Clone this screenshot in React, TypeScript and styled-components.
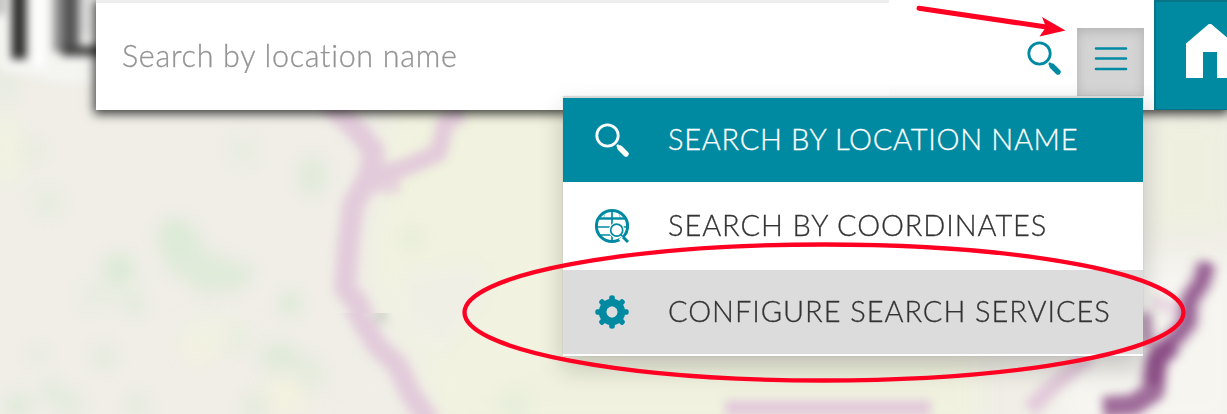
import React from "react";
import styled, { createGlobalStyle } from "styled-components";

const TEAL = "#008aa2";

const GlobalStyle = createGlobalStyle`
  * { box-sizing: border-box; }
  body { margin: 0; font-family: Lato, "Open Sans", sans-serif; font-weight: 300; }
`;

const Page = styled.main`
  position: relative;
  width: 1227px;
  height: 414px;
  overflow: hidden;
  background: #f0eee7;
`;

const MapCanvas = styled.svg`
  position: absolute;
  inset: 0;
`;

const TopBar = styled.header`
  position: relative;
  display: flex;
  height: 110px;
  margin-left: 96px;
  background: #fff;
  box-shadow: 0 2px 10px 2px rgba(0, 0, 0, 0.75);
`;

const Field = styled.input`
  width: 793px;
  height: 110px;
  padding: 0 26px 3px;
  border: 0;
  border-top: 3px solid #eeeeee;
  outline: none;
  background: transparent;
  font: 300 30.5px Lato, "Open Sans", sans-serif;
  letter-spacing: 0.7px;
  -webkit-text-stroke: 0.3px #949494;
  color: #999;
  &::placeholder { color: #949494; opacity: 1; }
`;

const Actions = styled.div`
  display: flex;
  flex: 1;
  justify-content: flex-end;
  align-items: flex-start;
  background: linear-gradient(#fff 75%, #f7f7f7);
`;

const SearchButton = styled.button`
  display: flex;
  margin: 40px 15px 0 0;
  padding: 0;
  border: 0;
  background: none;
`;

const MenuButton = styled.button`
  display: flex;
  justify-content: center;
  align-items: flex-start;
  width: 67px;
  height: 68px;
  margin: 28px 10px 0 0;
  padding: 18px 0 0;
  border: 0;
  background: #d4d4d4;
  box-shadow: inset 0 3px 12px rgba(0, 0, 0, 0.16);
`;

const HomeButton = styled.button`
  display: flex;
  align-items: flex-start;
  width: 73px;
  height: 110px;
  padding: 22px 0 0 30px;
  border: solid #087487;
  border-width: 2px 0 1px 2px;
  background: ${TEAL};
  overflow: hidden;
  svg { flex: none; }
`;

const Menu = styled.ul`
  position: absolute;
  left: 563px;
  top: 96px;
  width: 580px;
  height: 260px;
  margin: 0;
  padding: 0;
  border-top: 2px solid #d5d8d6;
  list-style: none;
  background: #fff;
  box-shadow: 0 12px 24px rgba(0, 0, 0, 0.2), 0 0 1px rgba(0, 0, 0, 0.2);
`;

const MenuItem = styled.li<{ $state?: "active" | "hover"; $spacing: number }>`
  display: flex;
  align-items: center;
  gap: 38px;
  height: 84px;
  margin-bottom: 2px;
  padding-left: 32px;
  white-space: nowrap;
  font-size: 29px;
  letter-spacing: ${(p) => p.$spacing}px;
  color: ${(p) => (p.$state === "active" ? "#fff" : "#333")};
  background: ${(p) =>
    p.$state === "active" ? TEAL : p.$state === "hover" ? "#dcdcdc" : "#fff"};
`;

const Label = styled.span`
  padding-bottom: 3px;
  -webkit-text-stroke: 0.3px currentColor;
`;

const Markup = styled.svg`
  position: absolute;
  inset: 0;
  pointer-events: none;
`;

function SearchIcon({ color = TEAL }: { color?: string }) {
  return (
    <svg width="35" height="36" viewBox="0 0 35 36" fill="none" stroke={color}>
      <circle cx="12.5" cy="13.5" r="10.7" strokeWidth="2.8" />
      <path d="M22 23 25 26" strokeWidth="2.5" />
      <path d="M25 26 31 32" strokeWidth="5.4" strokeLinecap="round" />
    </svg>
  );
}

function GlobeSearchIcon() {
  return (
    <svg width="35" height="36" viewBox="0 0 35 36" fill="none" stroke={TEAL}>
      <circle cx="17" cy="18" r="15.6" strokeWidth="3" />
      <path d="M3 10.5H31" strokeWidth="2.4" />
      <path d="M2 19H32M4 27H27M17 2V34" strokeWidth="1.7" />
      <path d="M12 2.5Q9 6 9 10M22 2.5Q25 6 25 10" strokeWidth="0.8" opacity="0.5" />
      <circle cx="21.7" cy="22.2" r="7.5" fill="#fff" stroke="#fff" strokeWidth="1" />
      <circle cx="21.7" cy="22.2" r="6" strokeWidth="1.7" />
      <path d="M25.5 29.5 34 38" stroke="#fff" strokeWidth="5" />
      <path d="m26 26.8 2 2" strokeWidth="1.5" />
      <path d="m28 29 5 5" strokeWidth="3" />
    </svg>
  );
}

function GearIcon() {
  const teeth = [0, 45, 90, 135, 180, 225, 270, 315];
  return (
    <svg width="35" height="36" viewBox="0 0 35 36" fill={TEAL}>
      {teeth.map((a) => (
        <path key={a} d="M10.5 9.5 14.2 5.5V3Q14.2 1.2 17 1.2T19.8 3V5.5L23.5 9.5Z" transform={`rotate(${a} 17 18)`} />
      ))}
      <circle cx="17" cy="18" r="9.3" fill="none" stroke={TEAL} strokeWidth="7.8" />
      <circle cx="17" cy="18" r="5.4" fill="#dcdcdc" />
    </svg>
  );
}

function MapBackground() {
  return (
    <MapCanvas width="1227" height="414">
      <defs>
        <filter id="soft" filterUnits="userSpaceOnUse" x="-60" y="-60" width="1350" height="540" colorInterpolationFilters="sRGB"><feGaussianBlur stdDeviation="5" /></filter>
        <filter id="patch" filterUnits="userSpaceOnUse" x="-60" y="-60" width="1350" height="540" colorInterpolationFilters="sRGB"><feGaussianBlur stdDeviation="8" /></filter>
        <filter id="wide" filterUnits="userSpaceOnUse" x="-60" y="-60" width="1350" height="540" colorInterpolationFilters="sRGB"><feGaussianBlur stdDeviation="12" /></filter>
        <filter id="letters" filterUnits="userSpaceOnUse" x="-60" y="-60" width="250" height="200" colorInterpolationFilters="sRGB"><feGaussianBlur stdDeviation="4.5" /></filter>
        <clipPath id="upper"><rect width="1227" height="313" /></clipPath>
        <clipPath id="lower"><rect y="313" width="1227" height="101" /></clipPath>
      </defs>
      <g filter="url(#wide)">
        <path d="M390 90H590V430H440Q430 360 382 312Q365 250 385 200Z" fill="#f1f2df" />
        <path d="M400 275 480 260 490 290 440 360 400 320Z" fill="#f0eee7" opacity=".8" />
        <path d="M570 350H980V430H430Z" fill="#f0f2df" />
        <path d="M1150 115H1227V230H1150Z" fill="#efefdf" />
        <path d="M1090 260H1240V430H1050Z" fill="#f6f5f0" />
        <ellipse cx="5" cy="150" rx="16" ry="36" fill="#f1f2df" />
        <ellipse cx="215" cy="330" rx="35" ry="12" fill="#f0f1e2" />
        <ellipse cx="200" cy="350" rx="18" ry="12" fill="#f3f2dd" />
        <ellipse cx="285" cy="395" rx="23" ry="18" fill="#f3f2dd" />
        <ellipse cx="370" cy="390" rx="22" ry="24" fill="#f0eee7" />
      </g>
      <g fill="#dcead7" filter="url(#patch)">
        <ellipse cx="175" cy="237" rx="17" ry="19" />
        <ellipse cx="119" cy="269" rx="16" ry="15" />
        <path d="M160 235 165 268 205 295 240 290 258 270 205 250 195 225Z" opacity=".8" />
        <circle cx="290" cy="304" r="11" /><circle cx="136" cy="307" r="9" opacity=".7" />
        <ellipse cx="312" cy="176" rx="14" ry="19" opacity=".8" />
        <ellipse cx="280" cy="357" rx="20" ry="15" opacity=".8" />
        <ellipse cx="309" cy="373" rx="14" ry="17" opacity=".5" />
        <circle cx="104" cy="357" r="12" opacity=".6" /><circle cx="37" cy="355" r="9" opacity=".5" />
        <circle cx="18" cy="406" r="14" opacity=".7" /><circle cx="52" cy="392" r="13" opacity=".5" />
        <circle cx="70" cy="404" r="14" opacity=".5" /><circle cx="137" cy="405" r="11" opacity=".6" />
        <circle cx="255" cy="407" r="12" opacity=".6" /><circle cx="240" cy="338" r="11" opacity=".4" />
        <circle cx="35" cy="151" r="10" opacity=".4" /><circle cx="48" cy="203" r="15" opacity=".4" />
        <circle cx="243" cy="151" r="15" opacity=".35" /><circle cx="411" cy="238" r="10" opacity=".6" />
        <circle cx="515" cy="405" r="14" opacity=".5" /><circle cx="5" cy="86" r="12" opacity=".5" />
        <path d="M85 280 140 282 145 306 75 310Z" opacity=".3" />
      </g>
      <g clipPath="url(#upper)">
        <g fill="none" stroke="#e2cbda" filter="url(#soft)" strokeLinejoin="round">
          <path d="M330 104 357 130 374 152 368 178 353 205 348 245 345 288 358 304 366 325" strokeWidth="22" />
          <path d="M365 178 404 168 438 153 446 121 463 113" strokeWidth="18" />
          <path d="M358 183H400" strokeWidth="20" opacity=".8" />
        </g>
      </g>
      <g clipPath="url(#lower)">
        <g fill="none" stroke="#e2cbda" filter="url(#soft)" strokeLinejoin="round">
          <path d="M374 314H387" stroke="#d3d7cf" strokeWidth="20" />
          <path d="M350 298 363 323 378 347 398 366 410 393 430 422" strokeWidth="21" />
        </g>
      </g>
      <g fill="none" stroke="#e2cada" filter="url(#soft)">
        <path d="M1030 409 1055 384 1078 365 1090 356" strokeWidth="16" />
        <path d="M1152 300 1185 314" strokeWidth="14" opacity=".6" />
        <path d="M725 408 931 408" strokeWidth="16" />
      </g>
      <g fill="none" stroke="#894b84" filter="url(#soft)" strokeLinejoin="round">
        <path d="M1206 264 1202 281 1189 301 1188 322 1176 337 1162 351 1155 365 1151 385" strokeWidth="24" opacity=".38" />
        <path d="M1207 262 1202 281 1189 301 1188 322 1176 337 1162 351 1155 365 1152 385" strokeWidth="13" opacity=".8" />
        <path d="M1173 345 1157 358 1154 391 1133 405 1103 407" strokeWidth="21" opacity=".8" />
        <path d="M1145 313 1147 345" strokeWidth="13" opacity=".6" />
      </g>
      <g filter="url(#letters)">
        <path d="M-10-10H98V83H60L30 76L0 70Z" fill="#f4f4f1" />
        <path d="M19-15V59" stroke="#303030" strokeWidth="15" fill="none" />
        <path d="M67-15V52" stroke="#8a8a8a" strokeWidth="27" fill="none" />
        <path d="M70-15V52" stroke="#505050" strokeWidth="12" fill="none" />
        <path d="M62 51H104" stroke="#444" strokeWidth="10" />
        <path d="M0-10V15" stroke="#aaa" strokeWidth="7" />
        <path d="M39-15V67" stroke="#fff" strokeWidth="11" />
        <path d="M86-15V36" stroke="#ddd" strokeWidth="9" />
      </g>
    </MapCanvas>
  );
}

export default function App() {
  return (
    <Page>
      <GlobalStyle />
      <MapBackground />
      <TopBar>
        <Field placeholder="Search by location name" />
        <Actions>
          <SearchButton aria-label="Search"><SearchIcon /></SearchButton>
          <MenuButton aria-label="Search options">
            <svg width="34" height="28" stroke={TEAL} strokeWidth="2.6" strokeLinecap="round">
              <path d="M2 2.5H32M2 12.5H32M2 23H32" />
            </svg>
          </MenuButton>
        </Actions>
        <HomeButton aria-label="Home">
          <svg width="52" height="56" viewBox="0 0 52 56">
            <path d="M0 19.5 24-1 48 19.5V54H31V28H17V54H0Z" fill="#fff" />
          </svg>
        </HomeButton>
      </TopBar>
      <Menu>
        <MenuItem $state="active" $spacing={0.7}><SearchIcon color="#fff" /><Label>SEARCH BY LOCATION NAME</Label></MenuItem>
        <MenuItem $spacing={0.9}><GlobeSearchIcon /><Label>SEARCH BY COORDINATES</Label></MenuItem>
        <MenuItem $state="hover" $spacing={0.95}><GearIcon /><Label>CONFIGURE SEARCH SERVICES</Label></MenuItem>
      </Menu>
      <Markup width="1227" height="414" fill="none" stroke="#ff0022">
        <ellipse cx="824" cy="312.5" rx="359.5" ry="68" strokeWidth="4.3" />
        <path d="M919 8.3 1048 27.3" strokeWidth="5" strokeLinecap="round" />
        <path d="M1065.5 30.5 1042 17 1046 27 1039.5 36.5Z" fill="#ff0022" stroke="none" />
      </Markup>
    </Page>
  );
}
